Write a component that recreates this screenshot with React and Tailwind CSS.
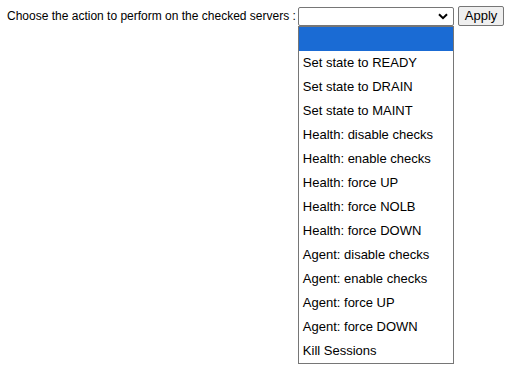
const actions = [
  "",
  "Set state to READY",
  "Set state to DRAIN",
  "Set state to MAINT",
  "Health: disable checks",
  "Health: enable checks",
  "Health: force UP",
  "Health: force NOLB",
  "Health: force DOWN",
  "Agent: disable checks",
  "Agent: enable checks",
  "Agent: force UP",
  "Agent: force DOWN",
  "Kill Sessions",
];

export default function App() {
  return (
    <div className="w-[512px] h-[369px] bg-white text-black font-['Liberation_Sans',Arial,sans-serif]">
      <div className="flex items-center pt-[6px] pl-[7px]">
        <span className="text-[12px] leading-[19px]">Choose the action to perform on the checked servers :</span>
        <div className="relative ml-[2px]">
          <div className="w-[156px] h-[19px] border border-[#767676] rounded-[2px] bg-white flex items-center justify-end pr-[5px]">
            <svg width="10" height="7" viewBox="0 0 10 7">
              <path d="M1 1.2 L5 5.2 L9 1.2" fill="none" stroke="#000" strokeWidth="2" />
            </svg>
          </div>
          <ul className="absolute left-0 top-[19px] w-[156px] border border-[#767676] bg-white">
            {actions.map((a, i) => (
              <li
                key={i}
                className={`h-[24px] pl-[4px] text-[13px] leading-[24px] ${i === 0 ? "bg-[#1a6bd4]" : ""}`}
              >
                {a}
              </li>
            ))}
          </ul>
        </div>
        <button className="ml-[4px] h-[20px] px-[6px] border border-[#767676] rounded-[2px] bg-[#efefef] text-[13px] leading-[18px]">
          Apply
        </button>
      </div>
    </div>
  );
}
